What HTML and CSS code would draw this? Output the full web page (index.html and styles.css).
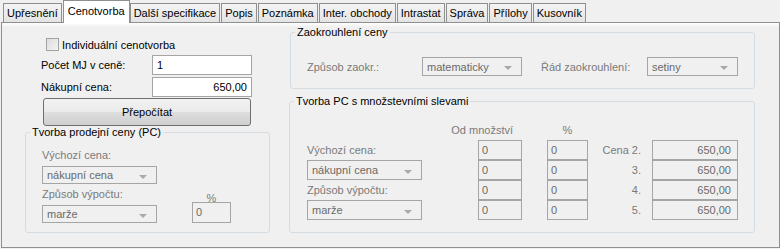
FILE: index.html
```html
<!DOCTYPE html>
<html lang="cs">
  <head>
    <meta charset="UTF-8" />
    <title>Cenotvorba</title>
    <link rel="stylesheet" href="styles.css">
  </head>
  <body>
    <div class="tabs">
      <div class="tab">Upřesnění</div>
      <div class="tab active">Cenotvorba</div>
      <div class="tab">Další specifikace</div>
      <div class="tab">Popis</div>
      <div class="tab">Poznámka</div>
      <div class="tab">Inter. obchody</div>
      <div class="tab">Intrastat</div>
      <div class="tab">Správa</div>
      <div class="tab">Přílohy</div>
      <div class="tab">Kusovník</div>
    </div>

    <div class="panel">
      <div class="col-left">
        <label class="check"><span class="box"></span>Individuální cenotvorba</label>
        <div class="row">
          <span class="row-label">Počet MJ v ceně:</span>
          <span class="edit">1</span>
        </div>
        <div class="row">
          <span class="row-label">Nákupní cena:</span>
          <span class="edit num">650,00</span>
        </div>
        <div class="button">Přepočítat</div>

        <fieldset class="group group-pc">
          <legend>Tvorba prodejní ceny (PC)</legend>
          <div class="pc-grid">
            <span class="dim lbl">Výchozí cena:</span>
            <span class="combo">nákupní cena<i class="arrow"></i></span>
            <span class="dim lbl">Způsob výpočtu:</span>
            <span class="combo combo-last">marže<i class="arrow"></i></span>
            <div class="pct">
              <span class="dim">%</span>
              <span class="field">0</span>
            </div>
          </div>
        </fieldset>
      </div>

      <div class="col-right">
        <fieldset class="group group-round">
          <legend>Zaokrouhlení ceny</legend>
          <div class="round-row">
            <span class="dim round-label">Způsob zaokr.:</span>
            <span class="combo combo-mat">matematicky<i class="arrow"></i></span>
            <span class="dim round-label2">Řád zaokrouhlení:</span>
            <span class="combo combo-set">setiny<i class="arrow"></i></span>
          </div>
        </fieldset>

        <fieldset class="group group-qty">
          <legend>Tvorba PC s množstevními slevami</legend>
          <div class="qty-grid">
            <span></span>
            <span class="dim head head-qty">Od množství</span><span></span>
            <span class="dim head">%</span><span></span><span></span>

            <span class="dim lbl">Výchozí cena:</span><span></span>
            <span class="field">0</span><span></span>
            <span class="field">0</span>
            <span class="dim price-label">Cena 2.</span>
            <span class="field num">650,00</span>

            <span class="combo">nákupní cena<i class="arrow"></i></span><span></span>
            <span class="field">0</span><span></span>
            <span class="field">0</span>
            <span class="dim price-label">3.</span>
            <span class="field num">650,00</span>

            <span class="dim lbl">Způsob výpočtu:</span><span></span>
            <span class="field">0</span><span></span>
            <span class="field">0</span>
            <span class="dim price-label">4.</span>
            <span class="field num">650,00</span>

            <span class="combo">marže<i class="arrow"></i></span><span></span>
            <span class="field">0</span><span></span>
            <span class="field">0</span>
            <span class="dim price-label">5.</span>
            <span class="field num">650,00</span>
          </div>
        </fieldset>
      </div>
    </div>
  </body>
</html>
```

FILE: styles.css
```css
/* Tahoma-like dialog look */
body {
  margin: 0;
  background-color: #f0f0f0;
  font-family: "Liberation Sans", Arial, sans-serif;
  font-size: 11px;
  color: #000;
}

.tabs {
  display: flex;
  align-items: flex-end;
  gap: 1px;
  height: 22px;
  padding-left: 3px;
}
.tab {
  box-sizing: border-box;
  height: 19px;
  padding: 0 3px;
  line-height: 18px;
  white-space: nowrap;
  border: 1px solid #8e8f8f;
  border-bottom: none;
  background: linear-gradient(#f4f4f4, #e4e4e4);
}
.tab.active {
  position: relative;
  z-index: 1;
  height: 23px;
  margin: 0 -1px -1px 0;
  padding: 0 4px;
  line-height: 21px;
  background: #fff;
}

.panel {
  box-sizing: border-box;
  display: flex;
  gap: 11px;
  width: 779px;
  height: 226px;
  margin-left: 1px;
  border: 1px solid #8e8f8f;
  background: linear-gradient(#fff 0, #f0f0f0 4px);
}

.col-left {
  width: 276px;
  padding-top: 15px;
}
.col-right {
  width: 465px;
  padding-top: 3px;
}

.check {
  display: flex;
  align-items: center;
  height: 13px;
  margin-left: 44px;
}
.box {
  box-sizing: border-box;
  width: 13px;
  height: 13px;
  margin-right: 3px;
  border: 1px solid #a3a3a3;
  background: linear-gradient(135deg, #dcdcdc, #f4f4f4);
}

.row {
  display: flex;
  align-items: center;
  margin-top: 2px;
  padding-left: 39px;
}
.row:first-of-type {
  margin-top: 4px;
}
.row-label {
  width: 111px;
}
.edit {
  box-sizing: border-box;
  width: 100px;
  height: 20px;
  padding: 0 4px;
  line-height: 18px;
  border: 1px solid #a5a5a5;
  background: #fff;
}
.num {
  text-align: right;
}

.button {
  box-sizing: border-box;
  width: 208px;
  height: 28px;
  margin: 1px 0 0 41px;
  line-height: 26px;
  text-align: center;
  border: 1px solid #707070;
  border-radius: 3px;
  background: linear-gradient(#f2f2f2 0%, #ebebeb 48%, #dddddd 52%, #cfcfcf 100%);
}

.group {
  box-sizing: border-box;
  margin: 0;
  padding: 0;
  min-width: 0;
  border: 1px solid #d5dde3;
  border-radius: 3px;
}
.group legend {
  margin-left: 4px;
  padding: 0 2px;
  line-height: 13px;
}

.dim {
  color: #7a7a7a;
}

.combo {
  box-sizing: border-box;
  display: flex;
  align-items: center;
  justify-content: space-between;
  height: 19px;
  padding: 0 9px 0 4px;
  border: 1px solid #a5a5a5;
  color: #6a6a6a;
}
.arrow {
  width: 0;
  height: 0;
  margin-top: 3px;
  border-left: 4px solid transparent;
  border-right: 4px solid transparent;
  border-top: 4px solid #a9a9a9;
}

.field {
  box-sizing: border-box;
  height: 20px;
  padding: 0 3px;
  line-height: 18px;
  border: 1px solid #a5a5a5;
  color: #6a6a6a;
}
.field.num {
  padding-right: 6px;
}

/* left group */
.group-pc {
  width: 245px;
  height: 107px;
  margin: 0 0 0 23px;
}
.pc-grid {
  display: grid;
  grid-template-columns: 115px 39px;
  column-gap: 35px;
  grid-template-rows: 22px 18px 20px 19px;
  padding: 5px 0 0 16px;
}
.pc-grid > * {
  grid-column: 1;
}
.pc-grid .lbl {
  align-self: center;
}
.pc-grid .combo {
  height: 18px;
}
.pc-grid .combo-last {
  margin-top: 1px;
}
.pc-grid .pct {
  grid-column: 2;
  grid-row: 3 / span 2;
  display: flex;
  flex-direction: column;
  align-items: center;
  justify-content: flex-end;
}
.pct .dim {
  line-height: 11px;
  margin-bottom: -2px;
}
.pct .field {
  width: 39px;
  height: 21px;
}

/* rounding group */
.group-round {
  width: 465px;
  height: 63px;
  margin-left: 1px;
}
.round-row {
  display: flex;
  align-items: center;
  padding: 18px 0 0 16px;
}
.round-label {
  width: 115px;
}
.combo-mat {
  width: 100px;
}
.round-label2 {
  width: 106px;
  margin-left: 19px;
}
.combo-set {
  width: 91px;
}

/* quantity group */
.group-qty {
  width: 466px;
  height: 138px;
  margin-top: 6px;
}
.qty-grid {
  display: grid;
  grid-template-columns: 115px 56px 44px 25px 41px 64px 86px;
  grid-template-rows: 21px 20px 20px 20px 20px;
  padding: 11px 0 0 17px;
}
.qty-grid .head {
  align-self: center;
  text-align: center;
  white-space: nowrap;
}
.qty-grid .head-qty {
  grid-column: 2 / span 2;
  text-align: right;
  padding-right: 9px;
}
.qty-grid .lbl {
  align-self: center;
}
.qty-grid .combo {
  height: 20px;
}
.price-label {
  padding-right: 11px;
  line-height: 20px;
  text-align: right;
}
```
